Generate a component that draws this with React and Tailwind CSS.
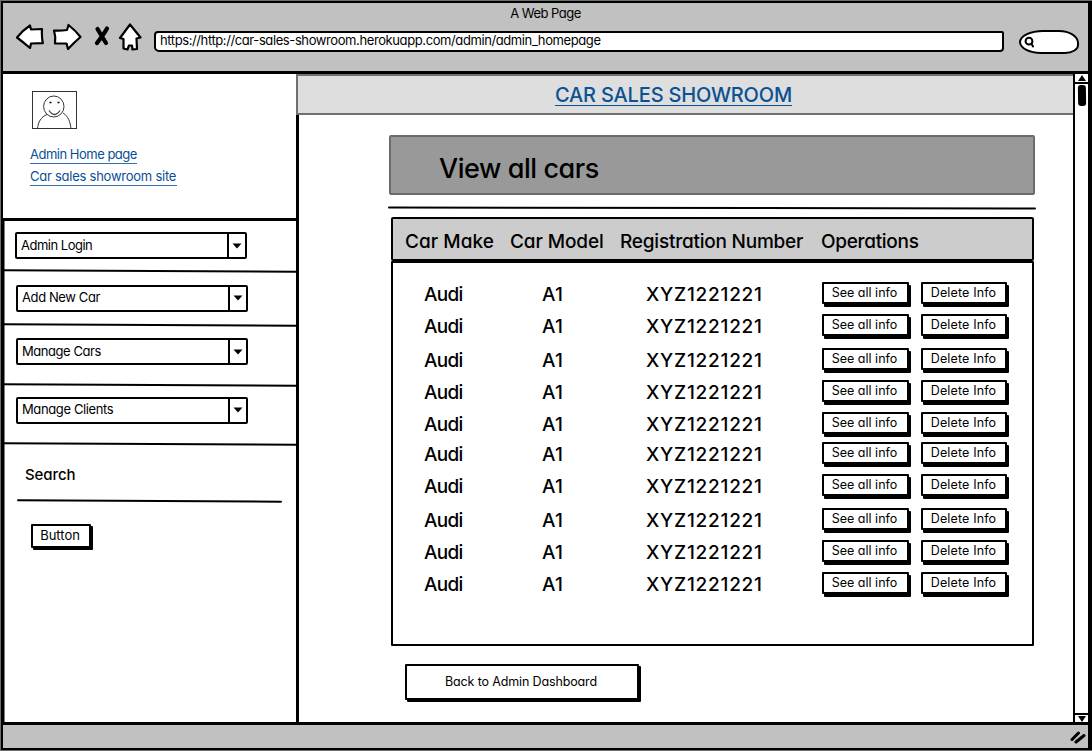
const cars = [
  { id: 1, height: 'h-8' },
  { id: 2, height: 'h-[34px]' },
  { id: 3, height: 'h-8' },
  { id: 4, height: 'h-8' },
  { id: 5, height: 'h-[30px]' },
  { id: 6, height: 'h-8' },
  { id: 7, height: 'h-[34px]' },
  { id: 8, height: 'h-8' },
  { id: 9, height: 'h-8' },
  { id: 10, height: 'h-8' },
];

function ToolbarIcons() {
  return (
    <svg className="mb-[6px] h-[30px] w-[126px] shrink-0" viewBox="16 22 126 30" fill="#fff" stroke="#000" strokeWidth="2.200" strokeLinejoin="round" strokeLinecap="round">
      <path d="M17 37.500 Q23 30 30 25.500 L31 29.500 L42 29 Q41.500 36 42.800 43.200 L31 43.500 L30 48 Q23 42 17 37.500 Z" />
      <path d="M54 30.500 Q60 31 67 30 L68.500 25 Q76 31 80.500 37 Q74 42.500 68 49 L66.500 43.500 L55 43.500 Q56 37 54 30.500 Z" />
      <path d="M97.500 29 Q101 35 106 43 M107 28.500 Q104 34 97 43" fill="none" strokeWidth="4.200" />
      <path d="M130 24.500 L140.500 37.500 L136.500 38.500 L137 49 L132.500 49.500 L132 45.500 L129 45.500 L127.500 49.500 L123.500 48.500 L123.500 39 L120 38 Z" />
    </svg>
  );
}

function BrowserBar() {
  return (
    <header className="flex h-[71px] shrink-0 flex-col border-b-[3px] border-black bg-[#c1c1c1]">
      <div className="flex h-[21px] items-center justify-center text-[13px] tracking-[-0.5px]">A Web Page</div>
      <div className="flex h-8 items-center pl-[13px]">
        <ToolbarIcons />
        <div className="mt-[3px] ml-3 flex h-[21px] w-[850px] shrink-0 items-center rounded-[4px_2px_4px_5px] border-2 border-black bg-white pb-px pl-1 text-[13px] tracking-[-0.4px]">
          https://http://car-sales-showroom.herokuapp.com/admin/admin_homepage
        </div>
        <div className="mt-[3px] ml-[15px] flex h-6 w-[60px] shrink-0 items-center rounded-[24px_20px_14px_22px/12px_13px_9px_12px] border-2 border-black bg-white pl-[3px]">
          <svg className="h-3 w-3" viewBox="0 0 12 12" fill="none" stroke="#000" strokeWidth="2" strokeLinecap="round">
            <circle cx="5" cy="5.200" r="3.400" />
            <path d="M7.500 7.800 L9 10.500" />
          </svg>
        </div>
      </div>
    </header>
  );
}

function Avatar() {
  return (
    <svg className="h-[39px] w-[46px]" viewBox="0 0 46 39" fill="none" stroke="#333" strokeWidth="1">
      <rect x="0.500" y="0.500" width="44" height="37" />
      <path d="M5.500 38 C6 31 9 26 15 23.500 M31 22 C36 25 38.500 31 39 38" />
      <ellipse cx="21.800" cy="15.500" rx="10.200" ry="10.500" />
      <path d="M17 19.500 Q22.500 27.500 28 19.500" strokeWidth="1.300" />
      <path d="M17.500 11.500 h2 M25.500 11.500 h2" stroke="#000" strokeWidth="1.600" />
    </svg>
  );
}

function Combo({ label, className }) {
  return (
    <div className={`flex h-[27px] w-[232px] border-2 border-black rounded-[2px] bg-white text-[13px] ${className}`}>
      <span className="flex flex-1 items-center pl-1">{label}</span>
      <span className="flex w-[18px] items-center justify-center border-l-2 border-black">
        <svg className="h-[6px] w-[10px]" viewBox="0 0 10 6"><path d="M0.500 0.500 H9.500 L5 5.500 Z" /></svg>
      </span>
    </div>
  );
}

function Rule({ className }) {
  return <div className={`bg-black ${className}`} />;
}

function SketchButton({ children, className }) {
  return (
    <button className={`flex items-center justify-center rounded-[1px] border-2 border-black bg-white whitespace-nowrap ${className}`}>
      {children}
    </button>
  );
}

function Sidebar() {
  return (
    <aside className="flex w-[296px] shrink-0 flex-col border-r-[3px] border-black">
      <section className="h-[144px] pt-[17px] pl-[27px] text-[13px] text-[#0a4f94]">
        <div className="pl-0.5"><Avatar /></div>
        <a className="mt-4 block h-[18px] w-[107px] border-b border-[#3472ad] leading-[17px] tracking-[-0.5px] whitespace-nowrap">Admin Home page</a>
        <a className="mt-1 block h-[18px] w-[147px] border-b border-[#3472ad] leading-[17px] tracking-[-0.25px] whitespace-nowrap">Car sales showroom site</a>
      </section>
      <div className="flex flex-1 flex-col shadow-[inset_1.500px_0_0_#000]">
        <Rule className="h-[3px] w-full shrink-0" />
        <section className="flex h-[49px] flex-col pt-[11px] pl-3">
          <Combo label="Admin Login" className="tracking-[-0.5px]" />
        </section>
        <Rule className="h-[1.500px] w-full rotate-[0.25deg]" />
        <section className="flex h-[52px] flex-col pt-[13px] pl-[13px]">
          <Combo label="Add New Car" className="tracking-[-0.4px]" />
        </section>
        <Rule className="h-[1.500px] w-full rotate-[0.25deg]" />
        <section className="flex h-[59px] flex-col pt-[13px] pl-[13px]">
          <Combo label="Manage Cars" className="tracking-[-0.45px]" />
        </section>
        <Rule className="h-[1.500px] w-full rotate-[0.25deg]" />
        <section className="flex h-[57px] flex-col pt-[11px] pl-[13px]">
          <Combo label="Manage Clients" className="tracking-[-0.38px]" />
        </section>
        <Rule className="h-[1.500px] w-full rotate-[0.25deg]" />
        <section className="flex flex-col pt-5">
          <h2 className="pl-[22px] text-[15px] leading-[22px] font-medium tracking-[-0.1px]">Search</h2>
          <Rule className="mt-[14px] ml-[14px] h-[1.500px] w-[265px] rotate-[0.3deg] rounded-full" />
          <SketchButton className="mt-[22px] ml-7 h-6 w-[60px] pr-0.5 text-[13px] shadow-[2px_2px_0_#000]">Button</SketchButton>
        </section>
      </div>
    </aside>
  );
}

function CarsTable() {
  return (
    <div className="ml-[92px] w-[643px]">
      <div className="grid h-[44px] grid-cols-[105px_110px_201px_1fr] items-center rounded-[2px] border-2 border-black bg-[#ccc] pt-[7px] pl-3 text-[19px] font-medium whitespace-nowrap">
        <span className="tracking-[0.05px]">Car Make</span>
        <span className="tracking-[-0.1px]">Car Model</span>
        <span className="tracking-[-0.22px]">Registration Number</span>
        <span className="tracking-[-0.3px]">Operations</span>
      </div>
      <div className="h-[385px] rounded-[1px] border-2 border-black bg-white pt-[19px] pl-[31px]">
        {cars.map((car) => (
          <div key={car.id} className={`grid grid-cols-[118px_104px_176px_99px_1fr] items-start text-[19px] leading-[26px] font-medium ${car.height}`}>
            <span className="tracking-[-0.7px]">Audi</span>
            <span className="tracking-[0.2px]">A1</span>
            <span className="tracking-[0.75px]">XYZ1221221</span>
            <SketchButton className="h-[22px] w-[87px] pr-0.5 pb-px text-[12.500px] leading-4 font-normal tracking-[0.02px] shadow-[2px_3px_0_#000]">See all info</SketchButton>
            <SketchButton className="h-[22px] w-[86px] pr-px pb-px text-[12.500px] leading-4 font-normal tracking-[0.15px] shadow-[2px_3px_0_#000]">Delete Info</SketchButton>
          </div>
        ))}
      </div>
    </div>
  );
}

function Content() {
  return (
    <main className="flex flex-1 flex-col">
      <div className="-ml-[3px] flex h-[41px] shrink-0 items-center justify-center border-2 border-r-0 border-[#707070] bg-[#dedede] pr-6">
        <a className="mt-px h-[22px] border-b-[1.500px] border-[#0a5294] text-[20px] leading-[23px] font-medium tracking-[-0.18px] text-[#0a5294]">CAR SALES SHOWROOM</a>
      </div>
      <h1 className="mt-5 ml-[90px] flex h-[60px] w-[646px] shrink-0 items-center rounded-[2px] border-2 border-[#6b6b6b] bg-[#999] pt-[8px] pl-12 text-[27px] font-medium tracking-[-0.45px]">View all cars</h1>
      <Rule className="mt-3 mb-[8px] ml-[89px] h-0.5 w-[648px] shrink-0 rotate-[0.1deg] rounded-full" />
      <CarsTable />
      <SketchButton className="mt-[18px] ml-[106px] h-[36px] w-[234px] shrink-0 pt-px pr-0.5 text-[12.500px] tracking-[-0.14px] shadow-[2px_2px_0_#000]">Back to Admin Dashboard</SketchButton>
    </main>
  );
}

function Scrollbar() {
  return (
    <div className="flex w-[15px] shrink-0 flex-col items-center border-l-2 border-black bg-white">
      <div className="flex h-[10px] w-full items-center justify-center border-b-2 border-black">
        <svg className="h-[6px] w-2" viewBox="0 0 8 6"><path d="M4 0 L8 6 H0 Z" /></svg>
      </div>
      <div className="mt-[1px] h-[21px] w-2 -rotate-1 rounded-[3px] bg-black" />
      <div className="mt-auto flex h-[9px] w-full items-center justify-center border-t-2 border-black">
        <svg className="h-[6px] w-2" viewBox="0 0 8 6"><path d="M0 0 H8 L4 6 Z" /></svg>
      </div>
    </div>
  );
}

export default function App() {
  return (
    <div className="h-[751px] w-[1092px] overflow-hidden border-t border-b border-l border-[#6c706c] bg-white font-['Inter',sans-serif] text-black [font-feature-settings:'cv11']">
      <div className="flex h-full flex-col border-t-2 border-r-[4px] border-b-2 border-l-[2.500px] border-black">
        <BrowserBar />
        <div className="flex min-h-0 flex-1">
          <Sidebar />
          <Content />
          <Scrollbar />
        </div>
        <footer className="flex h-[26px] shrink-0 items-center justify-end border-t-[3px] border-black bg-[#c1c1c1] pr-0.5">
          <svg className="h-[15px] w-4" viewBox="0 0 16 15" stroke="#000" strokeWidth="3" strokeLinecap="round">
            <path d="M2 10.500 L8.500 4 M6 13 L14 6.500" />
          </svg>
        </footer>
      </div>
    </div>
  );
}
